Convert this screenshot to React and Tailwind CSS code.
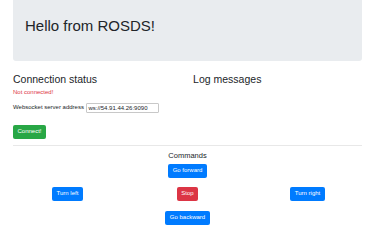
export default function App() {
  const btn =
    "h-[14px] px-[4.5px] text-[6px] leading-[9px] text-white rounded-[2px] flex items-center justify-center whitespace-nowrap";
  return (
    <div className="w-[370px] h-[240px] bg-white overflow-hidden font-['Liberation_Sans',Arial,sans-serif] text-[#212529]">
      <div className="ml-[13px] w-[349px]">
        <div className="bg-[#e9ecef] rounded-b-[3px] pt-[17px] pb-[26px] px-[12px]">
          <h1 className="text-[15px] leading-[18px] font-normal">Hello from ROSDS!</h1>
        </div>
        <div className="flex mt-[12px]">
          <div className="w-[174.5px]">
            <h3 className="text-[10.5px] leading-[12.6px] mb-[2px]">Connection status</h3>
            <p className="text-[#dc3545] text-[6px] leading-[9px]">Not connected!</p>
            <div className="flex items-center mt-[6px]">
              <span className="text-[6px] leading-[9px]">Websocket server address</span>
              <div className="ml-[2.5px] w-[73px] h-[10px] border border-[#c8c8c8] rounded-[1px] text-[6px] leading-[8px] pl-[1px] flex items-center">
                ws://54.91.44.26:9090
              </div>
            </div>
            <button className={btn + " bg-[#28a745] mt-[12px]"}>Connect!</button>
          </div>
          <div className="ml-[5.6px]">
            <h3 className="text-[10.5px] leading-[12.6px]">Log messages</h3>
          </div>
        </div>
        <div className="mt-[6px] h-px bg-[#e8e8e8]"></div>
        <h5 className="mt-[5px] text-center text-[7.5px] leading-[9px]">Commands</h5>
        <div className="flex justify-center mt-[4px]">
          <button className={btn + " bg-[#007bff]"}>Go forward</button>
        </div>
        <div className="flex mx-[-5.6px] mt-[9px]">
          <div className="flex-1 flex justify-center">
            <button className={btn + " bg-[#007bff]"}>Turn left</button>
          </div>
          <div className="flex-1 flex justify-center">
            <button className={btn + " bg-[#dc3545]"}>Stop</button>
          </div>
          <div className="flex-1 flex justify-center">
            <button className={btn + " bg-[#007bff]"}>Turn right</button>
          </div>
        </div>
        <div className="flex justify-center mt-[10px]">
          <button className={btn + " bg-[#007bff]"}>Go backward</button>
        </div>
      </div>
    </div>
  );
}
